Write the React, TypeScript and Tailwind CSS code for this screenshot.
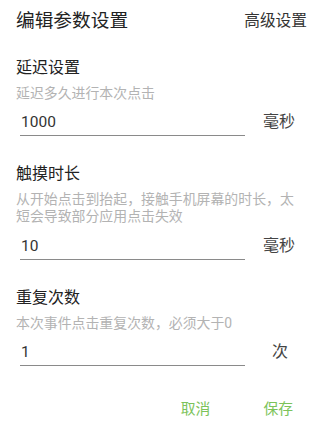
import React from "react";

const font = { fontFamily: "Roboto, 'Noto Sans CJK SC', sans-serif" };

function Field({ value, unit, unitClass }: { value: string; unit: string; unitClass: string }) {
  return (
    <div className="flex items-start">
      <div className="ml-5 w-[225px] h-[26px] border-b border-[#8a8a8a] text-[15.5px] leading-[25px] text-[#333] pl-px">
        {value}
      </div>
      <div className={`text-[16px] leading-[24px] text-[#444] ${unitClass}`}>{unit}</div>
    </div>
  );
}

export default function App() {
  return (
    <div style={font} className="w-[320px] h-[436px] bg-white overflow-hidden">
      <div className="h-[42px] flex items-center justify-between pl-4 pr-[13px]">
        <div className="text-[18.7px] text-[#222]">编辑参数设置</div>
        <div className="text-[15.7px] text-[#333]">高级设置</div>
      </div>

      <div className="px-4 mt-[15px] text-[16px] leading-[22px] text-[#222]">延迟设置</div>
      <div className="px-4 mt-[6px] text-[13.9px] leading-[17px] text-[#b3b3b3]">延迟多久进行本次点击</div>
      <div className="mt-[8px]">
        <Field value="1000" unit="毫秒" unitClass="ml-[18px]" />
      </div>

      <div className="px-4 mt-[27px] text-[16px] leading-[22px] text-[#222]">触摸时长</div>
      <div className="px-4 mt-[6px] text-[13.9px] leading-[17px] text-[#b3b3b3]">
        从开始点击到抬起，接触手机屏幕的时长，太
        <br />
        短会导致部分应用点击失效
      </div>
      <div className="mt-[9px]">
        <Field value="10" unit="毫秒" unitClass="ml-[18px]" />
      </div>

      <div className="px-4 mt-[27px] text-[16px] leading-[22px] text-[#222]">重复次数</div>
      <div className="px-4 mt-[6px] text-[13.9px] leading-[17px] text-[#b3b3b3]">本次事件点击重复次数，必须大于0</div>
      <div className="mt-[8px]">
        <Field value="1" unit="次" unitClass="ml-[27px]" />
      </div>

      <div className="mt-[32px] flex justify-end pr-[27px] gap-[53px] text-[14.8px] leading-[22px] text-[#7cc35a]">
        <span>取消</span>
        <span>保存</span>
      </div>
    </div>
  );
}
